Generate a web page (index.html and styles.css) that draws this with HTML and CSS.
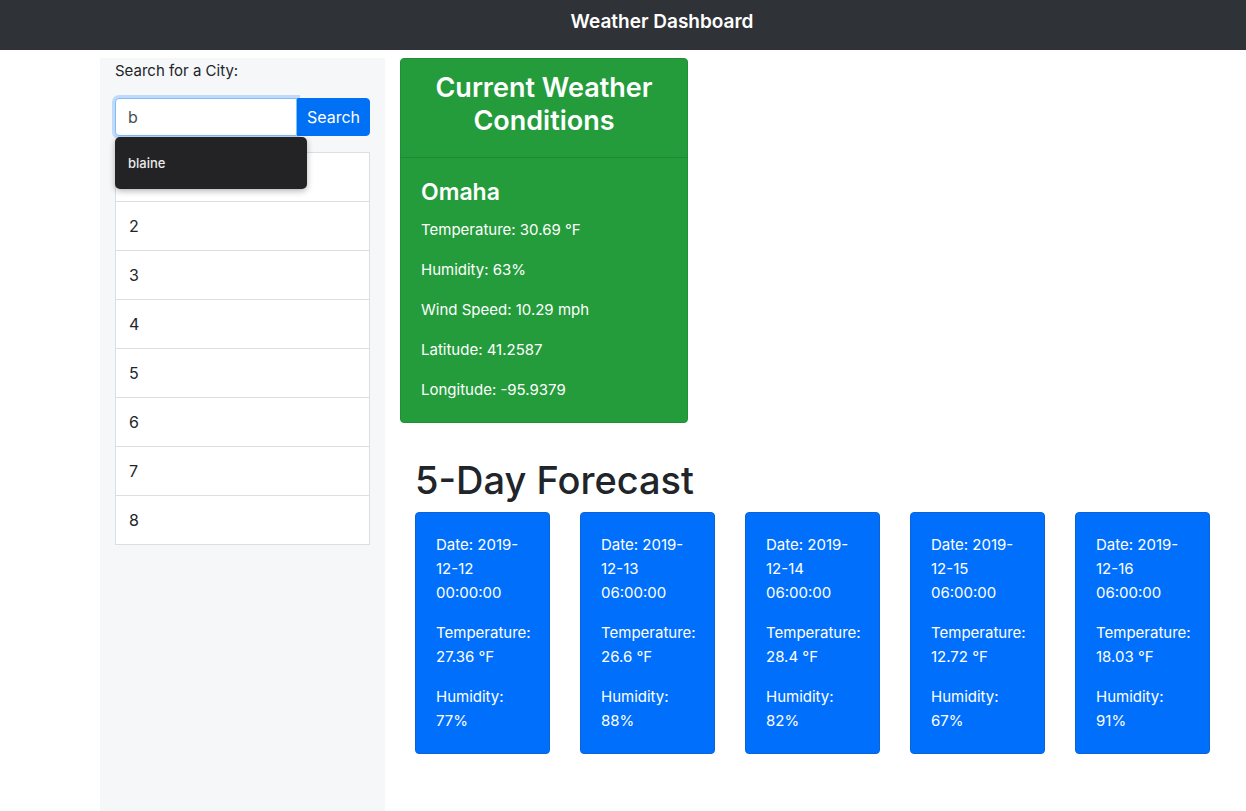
FILE: index.html
```html
<!DOCTYPE html>
<html lang="en">
<head>
<meta charset="utf-8">
<title>Weather Dashboard</title>
<link rel="stylesheet" href="styles.css">
</head>
<body>
<header class="topbar"><span class="brand">Weather Dashboard</span></header>
<main class="layout">
  <aside class="sidebar">
    <label class="search-label" for="city">Search for a City:</label>
    <div class="search-wrap">
      <div class="search-group">
        <input id="city" class="search-input" type="text" value="b">
        <button class="search-btn">Search</button>
      </div>
      <div class="autocomplete"><div class="ac-item">blaine</div></div>
    </div>
    <ul class="history">
      <li>1</li><li>2</li><li>3</li><li>4</li><li>5</li><li>6</li><li>7</li><li>8</li>
    </ul>
  </aside>
  <section class="content">
    <div class="current">
      <div class="current-head"><h3>Current Weather Conditions</h3></div>
      <div class="current-body">
        <h4>Omaha</h4>
        <p>Temperature: 30.69 °F</p>
        <p>Humidity: 63%</p>
        <p>Wind Speed: 10.29 mph</p>
        <p>Latitude: 41.2587</p>
        <p>Longitude: -95.9379</p>
      </div>
    </div>
    <div class="forecast">
      <h1>5-Day Forecast</h1>
      <div class="days">
        <div class="day"><p>Date: 2019-12-12 00:00:00</p><p>Temperature: 27.36 °F</p><p>Humidity: 77%</p></div>
        <div class="day"><p>Date: 2019-12-13 06:00:00</p><p>Temperature: 26.6 °F</p><p>Humidity: 88%</p></div>
        <div class="day"><p>Date: 2019-12-14 06:00:00</p><p>Temperature: 28.4 °F</p><p>Humidity: 82%</p></div>
        <div class="day"><p>Date: 2019-12-15 06:00:00</p><p>Temperature: 12.72 °F</p><p>Humidity: 67%</p></div>
        <div class="day"><p>Date: 2019-12-16 06:00:00</p><p>Temperature: 18.03 °F</p><p>Humidity: 91%</p></div>
      </div>
    </div>
  </section>
</main>
</body>
</html>
```

FILE: styles.css
```css
* { box-sizing: border-box; }
html, body { margin: 0; height: 100%; }
body {
  font-family: Inter, "Liberation Sans", sans-serif;
  font-size: 16px;
  line-height: 24px;
  color: #212529;
  background: #fff;
}
.topbar {
  height: 50px;
  background: #2f3337;
  display: flex;
  align-items: center;
  justify-content: center;
  padding: 0 0 6px 78px;
}
.brand { color: #fff; font-weight: 600; font-size: 19px; }
.layout {
  display: flex;
  padding: 8px 0 0 100px;
  min-height: calc(100% - 50px);
}
.sidebar {
  width: 285px;
  background: #f6f7f9;
  padding: 0 15px;
}
.search-label { display: block; margin-bottom: 15px; font-size: 15px; padding-top: 1px; }
.search-wrap { position: relative; }
.search-group { display: flex; height: 38px; }
.search-input {
  width: 182px;
  height: 38px;
  border: 1px solid #80bdff;
  border-radius: 4px 0 0 4px;
  box-shadow: 0 0 0 3px rgba(0, 123, 255, 0.22);
  padding: 6px 12px;
  font: inherit;
  font-size: 16px;
  color: #495057;
  outline: none;
}
.search-btn {
  flex: 1;
  border: 1px solid #0070f5;
  background: #0070f5;
  color: #fff;
  font: inherit;
  border-radius: 0 4px 4px 0;
  padding: 0;
}
.autocomplete {
  position: absolute;
  left: 0;
  top: 39px;
  width: 192px;
  height: 52px;
  background: #232325;
  border-radius: 5px;
  box-shadow: 0 2px 6px rgba(0,0,0,0.3);
  display: flex;
  align-items: center;
  padding-left: 13px;
  z-index: 2;
}
.ac-item { color: #ebebeb; font-size: 13px; font-weight: 500; }
.history {
  list-style: none;
  margin: 16px 0 0;
  padding: 0;
  background: #fff;
  border: 1px solid #dadfe3;
}
.history li {
  padding: 12px 13px;
  height: 49px;
  border-top: 1px solid #dadfe3;
}
.history li:first-child { border-top: 0; height: 48px; }
.content { padding: 0 15px; flex: 1; }
.current {
  width: 288px;
  background: #249c3c;
  color: #fff;
  border: 1px solid #1f8f36;
  border-radius: 4px;
}
.current-head {
  padding: 12px 20px;
  border-bottom: 1px solid #1f8a34;
  text-align: center;
}
.current-head h3 { margin: 0 0 8px; font-size: 27px; line-height: 33px; font-weight: 600; }
.current-body { padding: 20px; }
.current-body h4 { margin: 0 0 11px; font-size: 23px; line-height: 29px; font-weight: 600; }
.current-body p { margin: 0 0 16px; font-size: 15px; }
.current-body p:last-child { margin-bottom: 0; }
.forecast { padding-left: 15px; }
.forecast h1 {
  margin: 33px 0 8px;
  font-size: 38px;
  line-height: 48px;
  font-weight: 500;
}
.days { display: flex; gap: 30px; }
.day {
  width: 135px;
  background: #0070fc;
  border: 1px solid #0a64d8;
  border-radius: 4px;
  padding: 20px;
  color: #fff;
}
.day p { margin: 0 0 16px; font-size: 15px; }
.day p:last-child { margin-bottom: 0; }
```
